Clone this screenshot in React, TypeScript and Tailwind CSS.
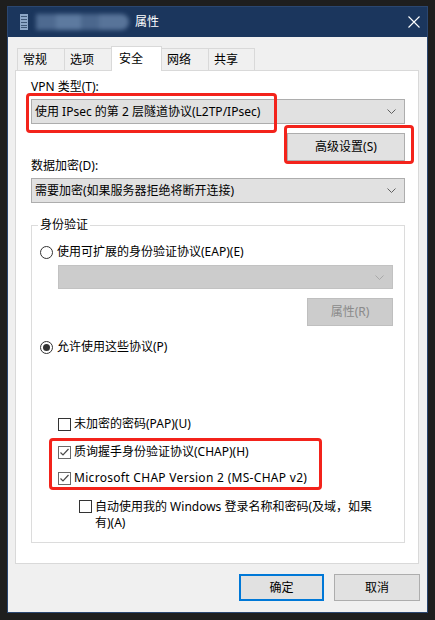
import React from "react";

function Chevron({ color = "#606060" }: { color?: string }) {
  return (
    <svg width="9" height="5" viewBox="0 0 9 5" className="shrink-0">
      <polyline points="0.5,0.5 4.5,4.5 8.5,0.5" fill="none" stroke={color} strokeWidth="1" />
    </svg>
  );
}

function Combo({ text }: { text: string }) {
  return (
    <div className="h-[25px] w-full bg-[#e1e1e1] border border-[#adadad] flex items-center pl-[3px] pr-[8px]">
      <span className="flex-1 leading-[16px] whitespace-nowrap">{text}</span>
      <Chevron />
    </div>
  );
}

function Radio({ checked, label }: { checked?: boolean; label: string }) {
  return (
    <div className="flex items-center h-[16px] ml-[8px] gap-[4px]">
      <div className="w-[13px] h-[13px] rounded-full border border-[#333] bg-white flex items-center justify-center">
        {checked && <div className="w-[7px] h-[7px] rounded-full bg-[#333]" />}
      </div>
      <span className="leading-[16px] whitespace-nowrap">{label}</span>
    </div>
  );
}

function Check({ checked }: { checked?: boolean }) {
  return (
    <div
      className={
        "w-[13px] h-[13px] shrink-0 border bg-white flex items-center justify-center " +
        (checked ? "border-[#6a6a6a]" : "border-[#333]")
      }
    >
      {checked && (
        <svg width="11" height="11" viewBox="0 0 11 11">
          <polyline points="1.5,5.5 4,8 9.5,2" fill="none" stroke="#4a4a4a" strokeWidth="1.2" />
        </svg>
      )}
    </div>
  );
}

function CheckRow({ checked, label, wide }: { checked?: boolean; label: string; wide?: boolean }) {
  return (
    <div className="flex items-center h-[16px] ml-[26px] gap-[3px]">
      <Check checked={checked} />
      <span className={"leading-[16px] whitespace-nowrap" + (wide ? " tracking-[0.3px]" : "")}>{label}</span>
    </div>
  );
}

function Tab({ label, active, cls }: { label: string; active?: boolean; cls: string }) {
  return (
    <div
      className={
        "flex items-center border-[#d9d9d9] " +
        cls +
        (active
          ? " h-[25px] -mb-px relative z-10 bg-white pl-[7px] pb-[1px]"
          : " h-[22px] bg-[#f0f0f0] pl-[5px] pt-[1px]")
      }
    >
      <span className="leading-[16px] whitespace-nowrap">{label}</span>
    </div>
  );
}

export default function App() {
  return (
    <div className="relative w-[435px] h-[620px] bg-[#1e1e1e] pt-[6px] pl-[7px] text-[12px] text-black font-['Noto_Sans','Noto_Sans_CJK_SC',sans-serif]">
      <div className="w-[421px] h-[607px] border border-[#2a4670] bg-[#f0f0f0] flex flex-col">
        {/* Title bar */}
        <div className="h-[30px] shrink-0 bg-[#1b365d] flex items-center">
          <svg width="8" height="16" viewBox="0 0 8 16" className="ml-[12px]">
            <rect x="0" y="0" width="8" height="16" fill="#8da7c8" />
            <rect x="1" y="2" width="6" height="1" fill="#3f5878" />
            <rect x="1" y="5" width="6" height="1" fill="#3f5878" />
            <rect x="1" y="8" width="6" height="1" fill="#3f5878" />
            <rect x="1" y="11" width="6" height="1" fill="#3f5878" />
            <rect x="1" y="13" width="6" height="1" fill="#3f5878" />
          </svg>
          <div className="ml-[8px] w-[93px] h-[16px] flex blur-[2px]">
            <div className="w-[20px] h-full bg-[#4e6a90]" />
            <div className="w-[25px] h-full bg-[#5d7a9f]" />
            <div className="w-[18px] h-full bg-[#4b678d]" />
            <div className="w-[30px] h-full bg-[#587499] rounded-r-full" />
          </div>
          <span className="ml-[6px] text-white leading-[16px]">属性</span>
          <svg width="12" height="12" viewBox="0 0 12 12" className="ml-auto mr-[7px]">
            <path d="M0.5 0.5 L11.5 11.5 M11.5 0.5 L0.5 11.5" stroke="#ffffff" strokeWidth="1.1" />
          </svg>
        </div>

        {/* Tabs */}
        <div className="pt-[9px] pl-[9px] flex items-end h-[33px] shrink-0">
          <Tab label="常规" cls="w-[47px] border-l border-t" />
          <Tab label="选项" cls="w-[47px] border-l border-t" />
          <Tab label="安全" active cls="w-[51px] border-l border-t border-r" />
          <Tab label="网络" cls="w-[46px] border-t" />
          <Tab label="共享" cls="w-[47px] border-l border-t border-r" />
        </div>

        {/* Panel */}
        <div className="ml-[7px] w-[404px] h-[494px] shrink-0 bg-white border border-[#d9d9d9] pl-[15px] pr-[13px] flex flex-col">
          <div className="mt-[8px] leading-[16px] h-[16px]">VPN 类型(T):</div>
          <div className="mt-[4px]">
            <Combo text="使用 IPsec 的第 2 层隧道协议(L2TP/IPsec)" />
          </div>
          <div className="mt-[9px] flex justify-end">
            <div className="w-[118px] h-[28px] bg-[#e1e1e1] border border-[#adadad] flex items-center justify-center">
              <span className="leading-[16px]">高级设置(S)</span>
            </div>
          </div>
          <div className="-mt-[3px] leading-[16px] h-[16px]">数据加密(D):</div>
          <div className="mt-[4px]">
            <Combo text="需要加密(如果服务器拒绝将断开连接)" />
          </div>

          <fieldset className="mt-[14px] border border-[#dcdcdc] pb-[11px] flex flex-col">
            <legend className="ml-[6px] px-[2px] leading-[16px]">身份验证</legend>
            <div className="mt-[11px]">
              <Radio label="使用可扩展的身份验证协议(EAP)(E)" />
            </div>
            <div className="ml-[26px] w-[335px] flex flex-col">
              <div className="mt-[5px] h-[24px] bg-[#cccccc] border border-[#c2c2c2] flex items-center justify-end pr-[8px]">
                <Chevron color="#a9a9a9" />
              </div>
              <div className="mt-[9px] self-end w-[86px] h-[28px] bg-[#cccccc] border border-[#bfbfbf] flex items-center justify-center">
                <span className="leading-[16px] text-[#8a8a8a]">属性(R)</span>
              </div>
            </div>
            <div className="mt-[13px]">
              <Radio checked label="允许使用这些协议(P)" />
            </div>
            <div className="mt-[61px]">
              <CheckRow label="未加密的密码(PAP)(U)" />
            </div>
            <div className="mt-[12px]">
              <CheckRow checked label="质询握手身份验证协议(CHAP)(H)" />
            </div>
            <div className="mt-[10px]">
              <CheckRow checked wide label="Microsoft CHAP Version 2 (MS-CHAP v2)" />
            </div>
            <div className="mt-[13px] ml-[47px] flex items-start gap-[3px]">
              <div className="mt-[1px]">
                <Check />
              </div>
              <div className="leading-[16px]">
                <div className="whitespace-nowrap">自动使用我的 Windows 登录名称和密码(及域，如果</div>
                <div className="whitespace-nowrap">有)(A)</div>
              </div>
            </div>
          </fieldset>
        </div>

        {/* Buttons */}
        <div className="mt-[10px] flex justify-end gap-[10px] pr-[7px]">
          <div className="w-[85px] h-[27px] bg-[#e1e1e1] border-2 border-[#0078d7] flex items-center justify-center">
            <span className="leading-[16px]">确定</span>
          </div>
          <div className="w-[86px] h-[27px] bg-[#e1e1e1] border border-[#adadad] flex items-center justify-center">
            <span className="leading-[16px]">取消</span>
          </div>
        </div>
      </div>

      {/* Red annotation boxes */}
      <div className="absolute left-[26px] top-[93px] w-[251px] h-[40px] border-[3px] border-[#f3231b] rounded-[4px] pointer-events-none" />
      <div className="absolute left-[284px] top-[125px] w-[130px] h-[39px] border-[3px] border-[#f3231b] rounded-[4px] pointer-events-none" />
      <div className="absolute left-[49px] top-[438px] w-[273px] h-[52px] border-[3px] border-[#f3231b] rounded-[4px] pointer-events-none" />
    </div>
  );
}
